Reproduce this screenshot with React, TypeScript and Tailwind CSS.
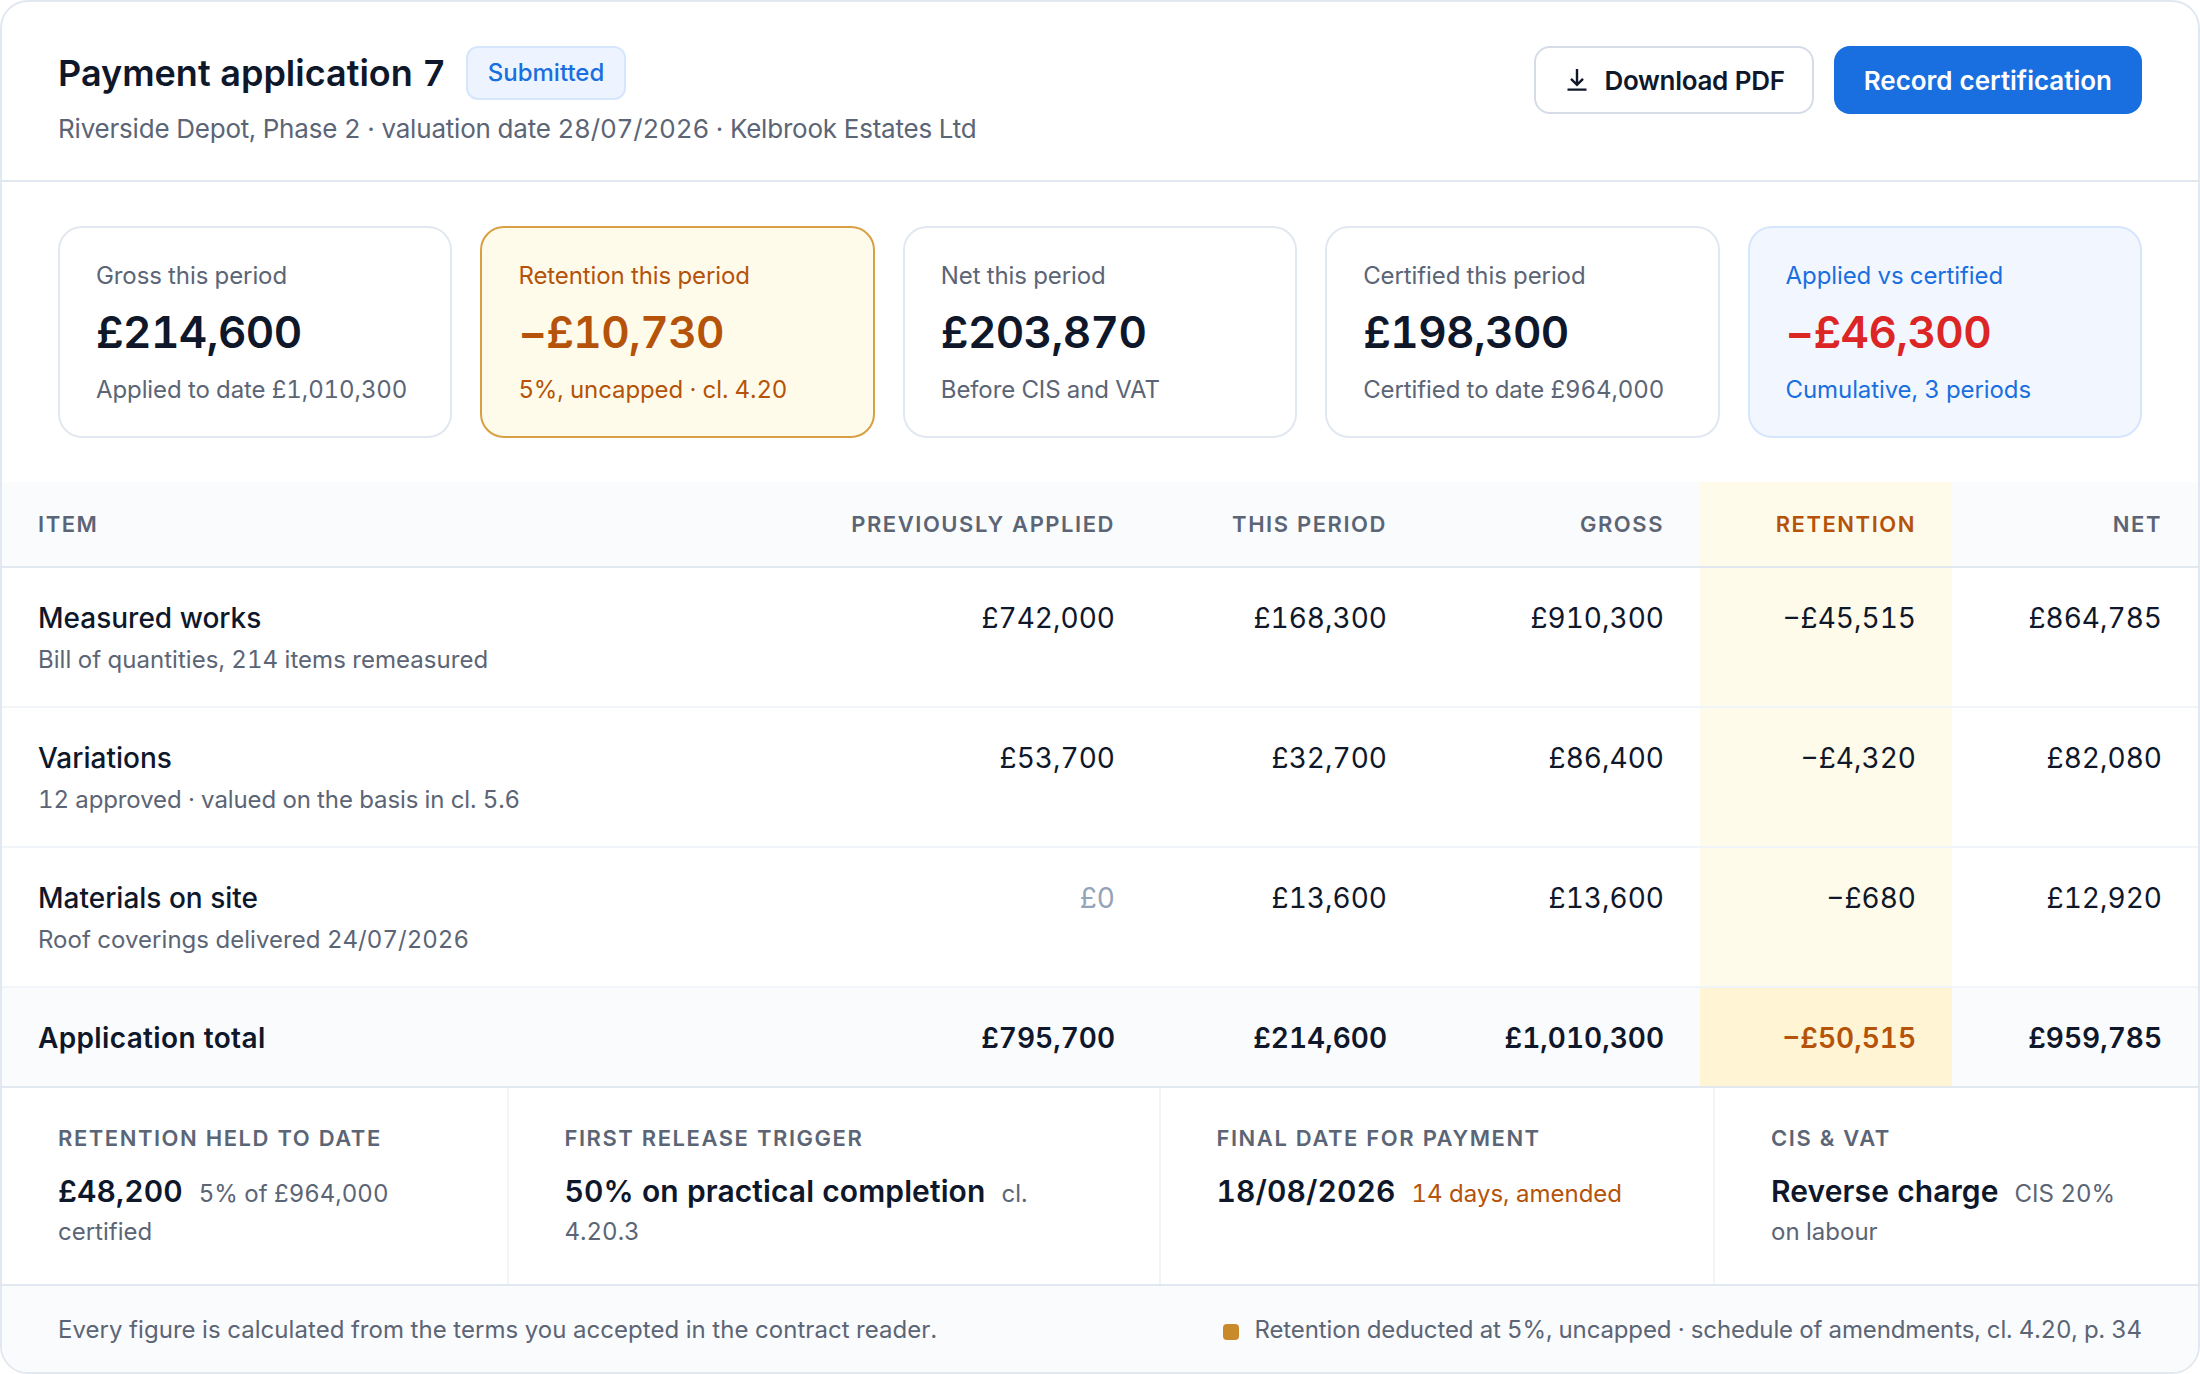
const kpis = [
  { label: 'Gross this period', value: '£214,600', note: 'Applied to date £1,010,300', box: 'border-[#e2e8f0] bg-white', top: 'text-[#5b6575]', val: 'text-[#0f172a]' },
  { label: 'Retention this period', value: '−£10,730', note: '5%, uncapped · cl. 4.20', box: 'border-[#d99f45] bg-[#fffbeb]', top: 'text-[#b45309]', val: 'text-[#b45309]' },
  { label: 'Net this period', value: '£203,870', note: 'Before CIS and VAT', box: 'border-[#e2e8f0] bg-white', top: 'text-[#5b6575]', val: 'text-[#0f172a]' },
  { label: 'Certified this period', value: '£198,300', note: 'Certified to date £964,000', box: 'border-[#e2e8f0] bg-white', top: 'text-[#5b6575]', val: 'text-[#0f172a]' },
  { label: 'Applied vs certified', value: '−£46,300', note: 'Cumulative, 3 periods', box: 'border-[#d6e6fc] bg-[#f2f7ff]', top: 'text-[#1a6fe0]', val: 'text-[#dc2626]' },
];

const rows = [
  { name: 'Measured works', sub: 'Bill of quantities, 214 items remeasured', track: 'tracking-[0.03px]', prev: '£742,000', period: '£168,300', gross: '£910,300', ret: '−£45,515', net: '£864,785' },
  { name: 'Variations', sub: '12 approved · valued on the basis in cl. 5.6', track: 'tracking-[-0.1px]', prev: '£53,700', period: '£32,700', gross: '£86,400', ret: '−£4,320', net: '£82,080' },
  { name: 'Materials on site', sub: 'Roof coverings delivered 24/07/2026', track: 'tracking-[0.03px]', prev: '£0', period: '£13,600', gross: '£13,600', ret: '−£680', net: '£12,920' },
];

const label = 'text-[22px] leading-[34px] font-semibold tracking-[1.54px] text-[#5b6575]';
const th = 'px-[36px] font-semibold';
const td = 'px-[36px] pt-[30px] text-right leading-[40px]';

function Summary({ title, value, note, noteColor = 'text-[#5b6575]', divider = true }: { title: string; value: string; note: string; noteColor?: string; divider?: boolean }) {
  return (
    <div className={`px-[56px] pt-[33px] ${divider ? 'border-l-2 border-[#f1f5f9]' : ''}`}>
      <div className={label}>{title}</div>
      <div className="mt-[20px] text-[24px] leading-[38px]">
        <span className="text-[30px] leading-[30px] font-semibold tracking-[0.1px]">{value}</span>
        <span className={`ml-[16px] ${noteColor}`}>{note}</span>
      </div>
    </div>
  );
}

export default function App() {
  return (
    <div className="w-[2200px] h-[1374px] bg-white font-['Inter',sans-serif] text-[#0f172a] [font-variant-numeric:tabular-nums]">
      <div className="h-full border-2 border-[#e2e8f0] rounded-[28px] overflow-hidden flex flex-col">
        {/* Header */}
        <header className="flex justify-between items-start px-[56px] pt-[44px] h-[180px] border-b-2 border-[#e2e8f0] shrink-0">
          <div>
            <div className="flex items-center gap-[20px]">
              <h1 className="text-[36px] leading-[54px] font-semibold">Payment application 7</h1>
              <span className="h-[54px] px-[20px] flex items-center rounded-[12px] border-2 border-[#d6e6fc] bg-[#edf4ff] text-[#1a6fe0] text-[24px] font-medium">Submitted</span>
            </div>
            <p className="mt-[11px] text-[26px] leading-[36px] tracking-[-0.2px] text-[#5b6575]">Riverside Depot, Phase 2 · valuation date 28/07/2026 · Kelbrook Estates Ltd</p>
          </div>
          <div className="flex gap-[20px]">
            <button className="h-[68px] pl-[31px] pr-[27px] flex items-center gap-[17px] rounded-[16px] border-2 border-[#d5dbe7] bg-white text-[26px] font-semibold tracking-[-0.3px]">
              <svg width="20" height="22" viewBox="0 0 20 22" fill="none" stroke="currentColor" strokeWidth="2.4">
                <path d="M10 0v15.5M4 9.8l6 6 6-6" />
                <path d="M0.5 20.6h19" />
              </svg>
              Download PDF
            </button>
            <button className="h-[68px] px-[30px] flex items-center rounded-[16px] bg-[#1a6fe0] text-white text-[26px] font-semibold">Record certification</button>
          </div>
        </header>

        {/* KPI cards */}
        <section className="grid grid-cols-5 gap-[28px] px-[56px] pt-[44px] pb-[44px] shrink-0">
          {kpis.map((k) => (
            <div key={k.label} className={`h-[212px] rounded-[24px] border-2 px-[36px] pt-[30px] ${k.box}`}>
              <div className={`text-[24px] leading-[36px] tracking-[-0.1px] ${k.top}`}>{k.label}</div>
              <div className={`mt-[8px] text-[44px] leading-[60px] font-semibold tracking-[-0.6px] ${k.val}`}>{k.value}</div>
              <div className={`mt-[10px] text-[24px] leading-[36px] tracking-[-0.1px] ${k.top}`}>{k.note}</div>
            </div>
          ))}
        </section>

        {/* Table */}
        <table className="w-full table-fixed border-separate border-spacing-0 shrink-0">
          <colgroup>
            <col className="w-[798px]" />
            <col className="w-[351px]" />
            <col className="w-[272px]" />
            <col className="w-[277px]" />
            <col className="w-[252px]" />
            <col className="w-[246px]" />
          </colgroup>
          <thead>
            <tr className="text-[22px] tracking-[1.54px] text-[#5b6575]">
              <th className={`${th} h-[86px] bg-[#fafbfd] border-b-2 border-[#e2e8f0] text-left`}>ITEM</th>
              <th className={`${th} bg-[#fafbfd] border-b-2 border-[#e2e8f0] text-right`}>PREVIOUSLY APPLIED</th>
              <th className={`${th} bg-[#fafbfd] border-b-2 border-[#e2e8f0] text-right`}>THIS PERIOD</th>
              <th className={`${th} bg-[#fafbfd] border-b-2 border-[#e2e8f0] text-right`}>GROSS</th>
              <th className={`${th} bg-[#fffbeb] border-b-2 border-[#e2e8f0] text-right text-[#b45309]`}>RETENTION</th>
              <th className={`${th} bg-[#fafbfd] border-b-2 border-[#e2e8f0] text-right`}>NET</th>
            </tr>
          </thead>
          <tbody>
            {rows.map((r) => (
              <tr key={r.name} className="text-[28px] align-top">
                <td className="h-[140px] px-[36px] pt-[30px] border-b-2 border-[#f1f5f9]">
                  <div className="font-medium leading-[40px]">{r.name}</div>
                  <div className={`mt-[4px] text-[24px] leading-[36px] text-[#5b6575] ${r.track}`}>{r.sub}</div>
                </td>
                <td className={`${td} border-b-2 border-[#f1f5f9] ${r.prev === '£0' ? 'text-[#94a3b8]' : ''}`}>{r.prev}</td>
                <td className={`${td} border-b-2 border-[#f1f5f9]`}>{r.period}</td>
                <td className={`${td} border-b-2 border-[#f1f5f9]`}>{r.gross}</td>
                <td className={`${td} border-b-2 border-[#f1f5f9] bg-[#fffbeb]`}>{r.ret}</td>
                <td className={`${td} border-b-2 border-[#f1f5f9]`}>{r.net}</td>
              </tr>
            ))}
            <tr className="text-[28px] font-semibold">
              <td className="h-[98px] px-[36px] pt-[2px] bg-[#fafbfd] tracking-[0.35px]">Application total</td>
              <td className="px-[36px] pt-[2px] text-right bg-[#fafbfd]">£795,700</td>
              <td className="px-[36px] pt-[2px] text-right bg-[#fafbfd]">£214,600</td>
              <td className="px-[36px] pt-[2px] text-right bg-[#fafbfd]">£1,010,300</td>
              <td className="px-[36px] pt-[2px] text-right bg-[#fff4d4] text-[#b45309]">−£50,515</td>
              <td className="px-[36px] pt-[2px] text-right bg-[#fafbfd]">£959,785</td>
            </tr>
          </tbody>
        </table>

        {/* Summary strip */}
        <section className="grid grid-cols-[504.5px_652px_554.5px_1fr] h-[200px] border-y-2 border-[#e2e8f0] shrink-0">
          <Summary divider={false} title="RETENTION HELD TO DATE" value="£48,200" note="5% of £964,000 certified" />
          <Summary title="FIRST RELEASE TRIGGER" value="50% on practical completion" note="cl. 4.20.3" />
          <Summary title="FINAL DATE FOR PAYMENT" value="18/08/2026" note="14 days, amended" noteColor="text-[#b45309]" />
          <Summary title="CIS &amp; VAT" value="Reverse charge" note="CIS 20% on labour" />
        </section>

        {/* Footer */}
        <footer className="flex-1 flex items-center justify-between px-[56px] pt-[2px] bg-[#fafbfd] text-[24px] text-[#5b6575]">
          <span className="tracking-[0.05px]">Every figure is calculated from the terms you accepted in the contract reader.</span>
          <span className="flex items-center gap-[16px] tracking-[-0.13px]">
            <span className="w-[16px] h-[16px] mt-[4px] rounded-[4px] bg-[#c98a2b]" />
            Retention deducted at 5%, uncapped · schedule of amendments, cl. 4.20, p. 34
          </span>
        </footer>
      </div>
    </div>
  );
}
